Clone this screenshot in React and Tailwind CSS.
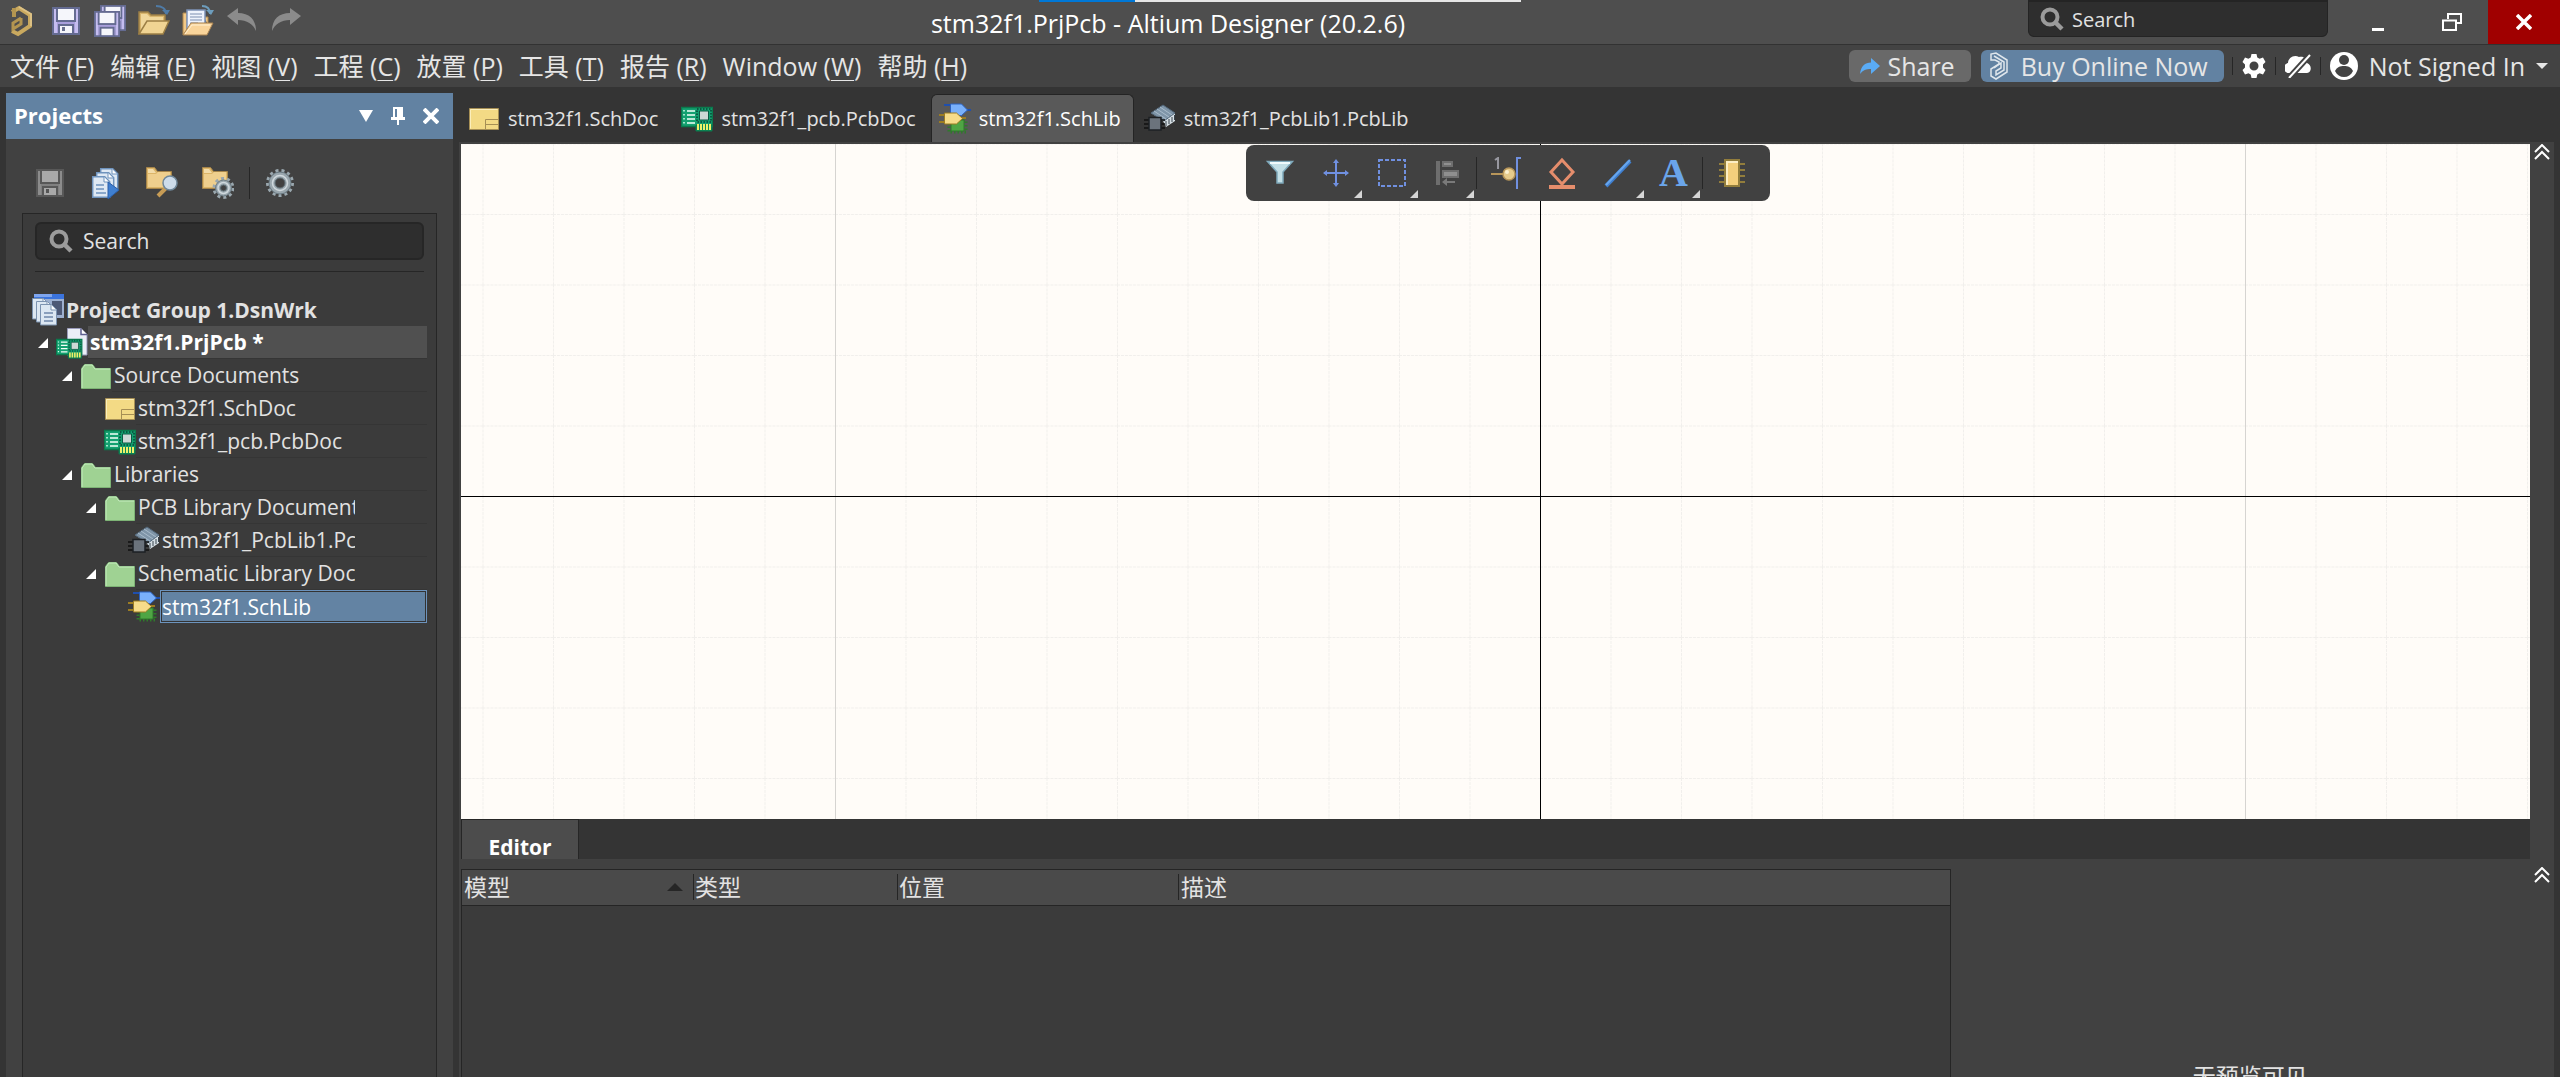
import React, { useState } from 'react';
import clsx from 'clsx';

/* ---------- icons ---------- */

const AltiumLogo = () => (
  <svg width="32" height="32" viewBox="0 0 32 32" fill="none">
    <path d="M6 7 13 3l11 7v11L12 29l-6-3" stroke="#c9a95f" strokeWidth="4" />
    <path d="M8 3v9" stroke="#b39550" strokeWidth="4" />
    <path d="M15 13v6l-8 5v-6l8-5" stroke="#b39550" strokeWidth="3" />
    <path d="M13 2 25 9v12" stroke="#dcc184" strokeWidth="2" />
  </svg>
);

const Floppy = ({ edge, body, light, paper, slot }) => (
  <>
    <path d="M0 0h28v28H0z" fill={edge} />
    <path d="M2 2h3v24H2zM23 2h3v24h-3z" fill={light} />
    <path d="M5 14h18v12H5z" fill={body} />
    <path d="M4 1h20v14H4z" fill={edge} />
    <path d="M6 2h16v11H6z" fill={paper} />
    <path d="M6 17h16v10H6z" fill={edge} />
    <path d="M8 19h12v7H8z" fill={paper} />
    <path d="M10 20h3v4h-3z" fill={slot} />
  </>
);

const SaveIcon = () => (
  <svg width="32" height="32" viewBox="0 0 32 32">
    <g transform="translate(2 2)">
      <Floppy edge="#646b91" body="#a99fdc" light="#c5bdf0" paper="#f5f6fb" slot="#6a7190" />
    </g>
  </svg>
);

const SaveAllIcon = () => (
  <svg width="32" height="32" viewBox="0 0 32 32">
    <g transform="translate(6 0) scale(.93)">
      <Floppy edge="#646b91" body="#a99fdc" light="#c5bdf0" paper="#f5f6fb" slot="#6a7190" />
    </g>
    <g transform="translate(0 6) scale(.93)">
      <Floppy edge="#646b91" body="#a99fdc" light="#c5bdf0" paper="#f5f6fb" slot="#f5f6fb" />
    </g>
  </svg>
);

const SaveGreyIcon = () => (
  <svg width="32" height="32" viewBox="0 0 32 32">
    <g transform="translate(2 2)">
      <Floppy edge="#585858" body="#808080" light="#8c8c8c" paper="#a9a9a9" slot="#555555" />
    </g>
  </svg>
);

const OpenFolderIcon = () => (
  <svg width="32" height="32" viewBox="0 0 32 32">
    <path d="M1 29V7h9l3 3h14v8" fill="#d8b56c" stroke="#9c7f45" strokeWidth="1.500" />
    <path d="M3 26V9h6l3 3h13v5H9z" fill="#f0d79b" />
    <path d="M1 29 9 16h22l-6 13z" fill="#f0d493" stroke="#9c7f45" strokeWidth="1.500" />
    <path d="M18 1c6 0 10 3 10 8" fill="none" stroke="#4f7ba6" strokeWidth="2" />
    <path d="M24 5h8l-3 5z" fill="#4f7ba6" />
  </svg>
);

const OpenDocsIcon = () => (
  <svg width="32" height="32" viewBox="0 0 32 32">
    <path d="M1 30V8h4v22M22 12h4v8" fill="#f2c987" stroke="#b0884c" />
    <path d="M5 24V5h18v19z" fill="#eef3fc" stroke="#7d92b6" strokeWidth="1.500" />
    <path d="M8 9h12M8 12h12M8 15h12M8 18h8" stroke="#7c8fb0" />
    <path d="M1 30 9 18h22l-6 12z" fill="#f9d49a" stroke="#a88250" />
    <path d="m3 29 7-9h18" stroke="#fff0d2" fill="none" />
    <path d="M20 1c5 0 8 3 8 8" fill="none" stroke="#6d9dbd" strokeWidth="2" />
    <path d="M24 5h8l-3 5z" fill="#6d9dbd" />
  </svg>
);

const CurvedArrow = ({ flip }) => (
  <svg width="32" height="32" viewBox="0 0 32 32" className={clsx(flip && '-scale-x-100')}>
    <path d="M1 11 12 3v5c11 0 18 6 18 18-3-7-9-11-18-11v5z" fill="#8b8b8b" />
  </svg>
);

const Magnifier = () => (
  <svg width="24" height="24" viewBox="0 0 24 24" fill="none" stroke="#9b9b9b" className="shrink-0">
    <circle cx="10" cy="10" r="7.500" strokeWidth="4" />
    <path d="m15 15 7 7" strokeWidth="4.500" />
  </svg>
);

const CopyDocsIcon = () => (
  <svg width="32" height="32" viewBox="0 0 32 32">
    {[[10, 1], [6, 5], [2, 9]].map(([x, y]) => (
      <g key={x} transform={`translate(${x} ${y})`}>
        <path d="M.700.700h12l5 5v15.600H.700z" fill="#dfe9f4" stroke="#6f93bd" strokeWidth="1.500" />
        <path d="M12 1v5h5" fill="#fff" stroke="#6f93bd" />
      </g>
    ))}
    <path d="M6 18h8M6 22h8M6 26h10" stroke="#6f93bd" strokeWidth="1.500" />
    <path d="M18 15v17l11-9z" fill="#3f7fd0" stroke="#2a5ea8" />
  </svg>
);

const SmallFolder = () => (
  <>
    <path d="M.500 21.500V.500h8l3 4h14v17z" fill="#dcb568" stroke="#a6854a" />
    <path d="M2 20V7h8l2-2h12v15z" fill="#efcf8d" />
    <path d="M2 6V2h5l3 4z" fill="#f3dca8" />
  </>
);

const GearShape = ({ r = 14, hole = 5, fill = '#9aa7ae' }) => (
  <>
    <circle r={r - 1.5} fill="none" stroke={fill} strokeWidth="3" strokeDasharray="3 3" />
    <circle r={r - 3} fill={fill} stroke="#6b7b84" />
    <circle r={hole + 2.5} fill="none" stroke="#cfd8dd" strokeWidth="1.500" />
    <circle r={hole} fill="#414141" stroke="#5d6b72" />
  </>
);

const FolderSearchIcon = () => (
  <svg width="32" height="32" viewBox="0 0 32 32">
    <SmallFolder />
    <path d="m12 29 8-8" stroke="#c79c55" strokeWidth="4" />
    <circle cx="24" cy="16" r="7" fill="#cddcea" stroke="#6f8799" strokeWidth="1.500" />
  </svg>
);

const FolderGearIcon = () => (
  <svg width="32" height="32" viewBox="0 0 32 32">
    <SmallFolder />
    <g transform="translate(21.500 21)">
      <GearShape r={11} hole={3} />
    </g>
  </svg>
);

const GearIcon = () => (
  <svg width="32" height="32" viewBox="-16 -16 32 32">
    <GearShape />
  </svg>
);

const WorkspaceIcon = () => (
  <svg width="32" height="32" viewBox="0 0 32 32">
    <path d="M2 0h30v24H2z" fill="#9db0d0" />
    <path d="M2 0h30v5H2z" fill="#3b74dd" />
    <path d="M2 0h18v3H2z" fill="#7fa6ee" />
    <path d="M20 7h10v14H20z" fill="#4d5976" />
    {[[0, 4], [4, 7], [8, 10]].map(([x, y]) => (
      <g key={x} transform={`translate(${x} ${y})`}>
        <path d="M.500.500h11l5 5V21h-16z" fill="#dce7f2" stroke="#7c93b0" />
        <path d="M11 1v5h5" fill="#fff" stroke="#7c93b0" />
      </g>
    ))}
    <path d="M12 19h9M12 23h9M12 27h9" stroke="#6f88ab" strokeWidth="1.500" />
  </svg>
);

const Board = () => (
  <>
    <path d="M.500.500h31v19h-31z" fill="#14a171" stroke="#0a7a4d" strokeWidth="1.500" />
    <path d="M15 18h16v6H15z" fill="#0d8a5b" stroke="#0a7a4d" />
    <path d="M6 4h8M6 8h8M6 12h8M6 16h8" stroke="#f2fff8" strokeWidth="1.500" />
    <path d="M3 3v15" stroke="#d5ffe9" strokeWidth="1.500" strokeDasharray="1.500 2.500" />
    <path d="M16 2h14v13H16z" fill="none" stroke="#0b5a43" strokeWidth="2" strokeDasharray="1.500 1.500" />
    <path d="M18.500 4h9v9h-9z" fill="#cdd8d5" stroke="#0a5b43" />
    <path d="M17 17v6M20 17v6M23 17v6M26 17v6M29 17v6" stroke="#eef06a" strokeWidth="2" />
  </>
);

const ProjectIcon = () => (
  <svg width="32" height="32" viewBox="0 0 32 32">
    <path d="M11.500 1.500H25l6 6V28H11.500z" fill="#eaeef6" stroke="#9a9bbb" />
    <path d="M25 1.500v6h6" fill="#fff" stroke="#5d5f8f" strokeWidth="1.500" />
    <g transform="translate(0 12) scale(.82 .8)">
      <Board />
    </g>
  </svg>
);

const PcbIcon = () => (
  <svg width="32" height="32" viewBox="0 0 32 32">
    <g transform="translate(0 4)">
      <Board />
    </g>
  </svg>
);

const FolderIcon = () => (
  <svg width="32" height="32" viewBox="0 0 32 32">
    <path d="M1.500 28.500v-20l3-4h8l3 4h15v20z" fill="#9fd293" stroke="#7db375" />
    <path d="M2 28V9l3-4h7l3 4h15" fill="none" stroke="#c6ecc0" />
  </svg>
);

const SchDocIcon = () => (
  <svg width="32" height="32" viewBox="0 0 32 32">
    <path d="M1.500 5.500h29v21h-29z" fill="#f3da85" stroke="#a68f55" />
    <path d="M2.500 25.500v-19h27" fill="none" stroke="#fbeebb" />
    <path d="M17.500 26.500v-10h13M17.500 21.500h13" fill="none" stroke="#a68f55" />
  </svg>
);

const PcbLibIcon = () => (
  <svg width="32" height="32" viewBox="0 0 32 32">
    <path d="m7 10 12 8 3 6 9-6v-8z" fill="#d5dee4" />
    <path d="m7 10 12-8 12 8-11 8z" fill="#7f95a8" stroke="#52677a" />
    <path d="m10 8 12 8M13 6l12 8M16 4l12 8" stroke="#a9bccb" />
    <path d="M22 18v5M25 16v5M28 14v5M30.500 12v5" stroke="#39444d" />
    <path d="M0 17h21M0 21h21M0 25h21" stroke="#111" strokeWidth="1.500" />
    <path d="M5 14.500h12V27H5z" fill="#6b737c" stroke="#1d2024" strokeWidth="1.500" />
  </svg>
);

const SchLibIcon = () => (
  <svg width="32" height="32" viewBox="0 0 32 32">
    <path d="M10 18h17v11H10z" fill="none" stroke="#2f7a2b" strokeWidth="3" strokeDasharray="1.500 2" />
    <path d="M12 17h13v11H12z" fill="#4fa544" stroke="#2f7a2b" />
    <path d="M5 2h7M5 11h5M27 7h5" stroke="#1f4fae" strokeWidth="2" />
    <path d="M11.500 1h11l6 6-6 5.500h-11z" fill="#79b0fb" stroke="#2c62c0" />
    <path d="M0 12h6M0 19h6M23 15h4" stroke="#9c7c22" strokeWidth="2" />
    <path d="M5.500 10h12l6 5.500-6 5.500h-12z" fill="#f6dc8a" stroke="#9c7c22" />
  </svg>
);

const ShareArrow = () => (
  <svg width="22" height="18" viewBox="0 0 22 18">
    <path d="M1 17C2 9 6 5.500 12 5.500V1l9 8-9 8v-5c-5 0-8 1-11 5z" fill="#5aabf5" />
  </svg>
);

const BuyLogo = () => (
  <svg width="20" height="28" viewBox="0 0 20 28" fill="none" stroke="#dfe6ec" strokeWidth="1.500">
    <path d="M2 8V2l5-1 11 7v12L7 27l-5-3v-7l8-5v-2L6 8z" />
    <path d="M5 4l10 6v8l-8 5v-4l5-3v-5l-7 5" />
  </svg>
);

const SettingsGear = () => (
  <svg width="24" height="24" viewBox="0 0 24 24">
    <path
      fillRule="evenodd"
      fill="#fff"
      d="M9.500 0h5l.800 3.400 2.300 1.300L21 3.600l2.500 4.300-2.500 2.600v3l2.500 2.600-2.500 4.300-3.400-1.100-2.300 1.300-.800 3.400h-5l-.800-3.400-2.300-1.300L3 20.400.500 16.100 3 13.500v-3L.500 7.900 3 3.600l3.400 1.100 2.300-1.300zM12 7.500a4.500 4.500 0 1 0 0 9 4.500 4.500 0 0 0 0-9z"
    />
  </svg>
);

const CloudOff = () => (
  <svg width="26" height="24" viewBox="0 0 26 24">
    <path d="M5 19a5 5 0 0 1-2-10C3 4 9 0 14 3c5-1 8 2 8 6 5 2 5 9 0 10z" fill="#fff" />
    <path d="M4 24 25 1" stroke="#434343" strokeWidth="6" />
    <path d="M4 24 25 1" stroke="#fff" strokeWidth="2" />
  </svg>
);

const UserCircle = () => (
  <svg width="28" height="28" viewBox="0 0 28 28">
    <circle cx="14" cy="14" r="14" fill="#fff" />
    <circle cx="14" cy="8" r="5" fill="#434343" />
    <path d="M5 19c2-4 5-5 9-5s7 1 9 5c-2 4-5 6-9 6s-7-2-9-6z" fill="#434343" />
  </svg>
);

const DoubleChevron = () => (
  <svg width="16" height="16" viewBox="0 0 16 16" fill="none" stroke="#fff" strokeWidth="2">
    <path d="m1 8 7-7 7 7M1 15l7-7 7 7" />
  </svg>
);

/* ---------- active bar icons ---------- */

const FilterIcon = () => (
  <svg width="32" height="32" viewBox="0 0 32 32">
    <path d="M3.500 4.500h25L19 15v11h-6V15z" fill="#c3dfe6" stroke="#7fa9bb" strokeWidth="1.500" />
    <path d="M6 6h20" stroke="#f0fafc" strokeWidth="2" />
  </svg>
);

const MoveIcon = () => (
  <svg width="32" height="32" viewBox="0 0 32 32">
    <path d="M16 4v24M4 16h24" stroke="#7090e0" strokeWidth="2" />
    <path d="m13 6 3-4 3 4zM13 26l3 4 3-4zM7 13l-4 3 4 3zM25 13l4 3-4 3z" fill="#7090e0" />
  </svg>
);

const SelectIcon = () => (
  <svg width="32" height="32" viewBox="0 0 32 32">
    <path d="M3 3h26v26H3z" fill="none" stroke="#7090e0" strokeWidth="2" strokeDasharray="4 2" />
  </svg>
);

const AlignIcon = () => (
  <svg width="32" height="32" viewBox="0 0 32 32">
    <path d="M4 4h4v24H4z" fill="#6e6e6e" />
    <path d="M10 4h11v6H10zM10 13h17v8H10z" fill="#6e6e6e" />
    <path d="M12 6h7v2h-7zM12 15h13v4H12z" fill="#8f8f8f" />
    <path d="m10 25 5-4v3h8v2h-8v3z" fill="#7a7a7a" />
  </svg>
);

const PinIcon = () => (
  <svg width="32" height="32" viewBox="0 0 32 32">
    <path d="m5 3 3-2v11" fill="none" stroke="#97979f" strokeWidth="2" />
    <path d="M1 17h13" stroke="#b8965a" strokeWidth="2" />
    <path d="M31 1h-4v31" fill="none" stroke="#7090e0" strokeWidth="2" />
    <circle cx="19" cy="17" r="6" fill="#e6cb8c" stroke="#b8965a" strokeWidth="1.500" />
    <circle cx="17" cy="15" r="2" fill="#fbf0d0" />
  </svg>
);

const EraseIcon = () => (
  <svg width="32" height="32" viewBox="0 0 32 32">
    <path d="m16 3 11 12-11 12L5 15z" fill="none" stroke="#e58d6c" strokeWidth="3" />
    <path d="M3 28h26v4H3z" fill="#e58d6c" />
  </svg>
);

const LineIcon = () => (
  <svg width="32" height="32" viewBox="0 0 32 32">
    <path d="M4 29 28 4" stroke="#3f7fd0" strokeWidth="4" />
    <path d="M4 28 28 3" stroke="#68a6ec" strokeWidth="2" />
  </svg>
);

const PartIcon = () => (
  <svg width="32" height="32" viewBox="0 0 32 32">
    <path d="M3 7h26M3 13h26M3 19h26M3 25h26" stroke="#927d3c" strokeWidth="2" />
    <path d="M9 3h14v26H9z" fill="#f4cf7c" stroke="#927d3c" strokeWidth="2" />
    <path d="M11 28V5h11" fill="none" stroke="#fdeec4" strokeWidth="2" />
  </svg>
);

/* ---------- data ---------- */

const menus = [
  ['文件', 'F'],
  ['编辑', 'E'],
  ['视图', 'V'],
  ['工程', 'C'],
  ['放置', 'P'],
  ['工具', 'T'],
  ['报告', 'R'],
  ['Window', 'W'],
  ['帮助', 'H'],
];

const quickActions = [
  { label: 'Save', icon: <SaveIcon /> },
  { label: 'Save All', icon: <SaveAllIcon /> },
  { label: 'Open', icon: <OpenFolderIcon /> },
  { label: 'Open Project', icon: <OpenDocsIcon /> },
  { label: 'Undo', icon: <CurvedArrow /> },
  { label: 'Redo', icon: <CurvedArrow flip /> },
];

const tabs = [
  { name: 'stm32f1.SchDoc', icon: <SchDocIcon /> },
  { name: 'stm32f1_pcb.PcbDoc', icon: <PcbIcon /> },
  { name: 'stm32f1.SchLib', icon: <SchLibIcon /> },
  { name: 'stm32f1_PcbLib1.PcbLib', icon: <PcbLibIcon /> },
];

const indents = ['pl-[9px]', 'pl-[33px]', 'pl-[57px]', 'pl-[81px]', 'pl-[105px]'];

const tree = [
  { level: 0, name: 'Project Group 1.DsnWrk', icon: <WorkspaceIcon />, bold: true },
  { level: 1, name: 'stm32f1.PrjPcb *', icon: <ProjectIcon />, bold: true, open: true, focused: true },
  { level: 2, name: 'Source Documents', icon: <FolderIcon />, open: true },
  { level: 3, name: 'stm32f1.SchDoc', icon: <SchDocIcon /> },
  { level: 3, name: 'stm32f1_pcb.PcbDoc', icon: <PcbIcon /> },
  { level: 2, name: 'Libraries', icon: <FolderIcon />, open: true },
  { level: 3, name: 'PCB Library Documents', icon: <FolderIcon />, open: true },
  { level: 4, name: 'stm32f1_PcbLib1.PcbLib', icon: <PcbLibIcon /> },
  { level: 3, name: 'Schematic Library Documents', icon: <FolderIcon />, open: true },
  { level: 4, name: 'stm32f1.SchLib', icon: <SchLibIcon /> },
];

const activeBar = [
  { label: 'Filter', icon: <FilterIcon /> },
  { label: 'Move', icon: <MoveIcon />, more: true },
  { label: 'Select', icon: <SelectIcon />, more: true },
  { label: 'Align', icon: <AlignIcon />, more: true },
  { label: 'Pin', icon: <PinIcon />, divider: true },
  { label: 'IEEE Symbol', icon: <EraseIcon /> },
  { label: 'Line', icon: <LineIcon />, more: true },
  { label: 'Text', more: true },
  { label: 'Part', icon: <PartIcon />, divider: true },
];

/* ---------- parts ---------- */

const TitleBar = () => (
  <header className="relative flex h-[45px] shrink-0 items-start border-b border-[#323232] bg-[#4e4e4e]">
    <div className="absolute top-0 left-[1039px] flex h-0.5 w-[482px] bg-[#e6e6e6]">
      <div className="w-24 bg-[#0078d7]"></div>
    </div>
    <div className="flex items-center gap-3 pt-[5px] pl-1.5">
      <AltiumLogo />
      {quickActions.map((item) => (
        <button key={item.label} aria-label={item.label}>{item.icon}</button>
      ))}
    </div>
    <h1 className="flex-1 pl-1.5 text-center text-[25px] leading-[46px] text-white">stm32f1.PrjPcb - Altium Designer (20.2.6)</h1>
    <label className="flex h-[37px] w-[300px] items-center gap-2 rounded-b-md border border-t-2 border-[#242424] bg-[#2e2e2e] pl-[11px]">
      <Magnifier />
      <input aria-label="Search" placeholder="Search" className="w-full bg-transparent pt-0.5 text-[20px] outline-none placeholder:text-[#e2e2e2]" />
    </label>
    <div className="ml-4 flex h-11">
      <button aria-label="Minimize" className="flex w-[72px] items-center justify-center">
        <svg width="18" height="18" viewBox="0 0 18 18"><path d="M1 15h12v3H1z" fill="#fff" /></svg>
      </button>
      <button aria-label="Restore" className="flex w-[72px] items-center justify-center">
        <svg width="20" height="18" viewBox="0 0 20 18" fill="none" stroke="#fff" strokeWidth="2">
          <path d="M6 6V1h13v9h-5" />
          <path d="M1 7.500h13V17H1z" />
        </svg>
      </button>
      <button aria-label="Close" className="flex w-[72px] items-center justify-center bg-[#a00000]">
        <svg width="16" height="16" viewBox="0 0 16 16"><path d="m1 1 14 14M15 1 1 15" stroke="#fff" strokeWidth="3.500" /></svg>
      </button>
    </div>
  </header>
);

const MenuBar = () => (
  <nav className="flex h-[42px] shrink-0 items-center bg-[#434343] pl-2.5 text-[25px] leading-8 text-[#e6e6e6]">
    <div className="flex gap-4">
      {menus.map(([name, key]) => (
        <button key={key}>
          {name} (<span className="underline decoration-1 underline-offset-4">{key}</span>)
        </button>
      ))}
    </div>
    <button className="ml-auto flex h-8 items-center gap-1.5 rounded-md bg-[#696969] pr-4 pl-2.5">
      <ShareArrow />
      Share
    </button>
    <button className="ml-2.5 flex h-8 items-center gap-3 rounded-md bg-[#6282a2] pr-4 pl-2">
      <BuyLogo />
      Buy Online Now
    </button>
    <div className="ml-2 flex items-center gap-[9px]">
      <span className="h-[18px] w-px bg-[#262626]"></span>
      <button aria-label="Settings"><SettingsGear /></button>
      <span className="h-[18px] w-px bg-[#262626]"></span>
      <button aria-label="Offline"><CloudOff /></button>
      <span className="h-[18px] w-px bg-[#262626]"></span>
      <button className="flex items-center gap-[11px] pr-3">
        <UserCircle />
        Not Signed In
        <svg width="12" height="6" viewBox="0 0 12 6"><path d="M0 0h12L6 6z" fill="#e6e6e6" /></svg>
      </button>
    </div>
  </nav>
);

const TreeRow = ({ item, selected, onSelect }) => (
  <li className={clsx('flex h-[33px] items-stretch pr-[9px]', indents[item.level])}>
    {item.level > 0 && (
      <span className="-ml-6 flex w-6 items-center pl-1.5">
        {item.open && <svg width="10" height="10" viewBox="0 0 10 10"><path d="M10 0v10H0z" fill="#fff" /></svg>}
      </span>
    )}
    <span className="flex w-8 shrink-0 items-center">{item.icon}</span>
    <button
      onClick={onSelect}
      className={clsx(
        'flex min-w-0 flex-1 items-center text-left',
        item.bold && 'font-bold',
        item.focused && 'bg-[#505050] text-white',
        selected
          ? 'border border-[#6c93bd] bg-[#6383a3] pl-px text-white inset-ring inset-ring-[#333]'
          : 'pl-0.5',
        !selected && item.level > 0 && 'border-b border-[#353535]'
      )}
    >
      <span className="mr-[72px] min-w-0 overflow-hidden leading-[30px] whitespace-nowrap">{item.name}</span>
    </button>
  </li>
);

const ProjectsPanel = () => {
  const [selected, setSelected] = useState('stm32f1.SchLib');

  return (
    <aside className="mt-1.5 ml-1.5 flex w-[447px] shrink-0 flex-col bg-[#414141]">
      <div className="flex h-[46px] shrink-0 items-center bg-[#6282a2] pr-3.5 pl-2">
        <h2 className="flex-1 pb-0.5 text-[22px] font-bold text-white">Projects</h2>
        <button aria-label="Panel menu" className="mr-[18px]">
          <svg width="14" height="12" viewBox="0 0 14 12"><path d="M0 0h14L7 12z" fill="#fff" /></svg>
        </button>
        <button aria-label="Pin panel" className="mr-[18px]">
          <svg width="14" height="18" viewBox="0 0 14 18">
            <path fillRule="evenodd" d="M2 0h10v10h2v3H8v5H6v-5H0v-3h2zM4 2v8h2V2z" fill="#fff" />
          </svg>
        </button>
        <button aria-label="Close panel">
          <svg width="16" height="16" viewBox="0 0 16 16"><path d="m1 1 14 14M15 1 1 15" stroke="#fff" strokeWidth="4" /></svg>
        </button>
      </div>

      <div className="mt-7 mb-3.5 flex items-center gap-6 pl-7">
        <button aria-label="Save" className="disabled:cursor-default" disabled><SaveGreyIcon /></button>
        <button aria-label="Compile"><CopyDocsIcon /></button>
        <button aria-label="Explore"><FolderSearchIcon /></button>
        <button aria-label="Project options"><FolderGearIcon /></button>
        <button aria-label="Panel settings" className="-ml-[9px] border-l border-[#262626] pl-3.5"><GearIcon /></button>
      </div>

      <div className="mx-4 flex-1 border border-b-0 border-[#262626] bg-[#3b3b3b]">
        <div className="mx-3 border-b border-[#262626] pt-2 pb-[11px]">
          <label className="flex h-[38px] items-center gap-2.5 rounded-md border-2 border-[#262626] bg-[#2e2e2e] pl-3">
            <Magnifier />
            <input aria-label="Search projects" placeholder="Search" className="w-full bg-transparent pt-0.5 text-[21px] outline-none placeholder:text-[#e2e2e2]" />
          </label>
        </div>
        <ul className="pt-[21px] text-[21px] text-[#e2e2e2]">
          {tree.map((item) => (
            <TreeRow key={item.name} item={item} selected={selected === item.name} onSelect={() => setSelected(item.name)} />
          ))}
        </ul>
      </div>
    </aside>
  );
};

const DocumentTabs = () => {
  const [active, setActive] = useState('stm32f1.SchLib');

  return (
    <div className="flex h-[55px] shrink-0 items-end gap-0.5 pl-px text-[20px]">
      {tabs.map((tab) => (
        <button
          key={tab.name}
          onClick={() => setActive(tab.name)}
          className={clsx(
            'flex h-12 items-center gap-2 rounded-t-md border border-b-0 pr-3 pl-[7px]',
            active === tab.name ? 'border-[#242424] bg-[#595959] text-white' : 'border-transparent text-[#e2e2e2]'
          )}
        >
          {tab.icon}
          {tab.name}
        </button>
      ))}
    </div>
  );
};

// Sheet origin sits at (1079, 352); minor grid every 70.5px, major every 10 cells
const Sheet = () => (
  <svg className="block h-full flex-1 bg-[#fffcf8]">
    <defs>
      <pattern id="minor" x="1079" y="352" width="70.500" height="70.500" patternUnits="userSpaceOnUse">
        <path d="M.500 0v70.500M0 .500h70.500" stroke="#f1efec" strokeDasharray="3 1" />
      </pattern>
      <pattern id="major" x="1079" y="352" width="705" height="705" patternUnits="userSpaceOnUse">
        <path d="M.500 0v705" stroke="#d6d4d1" />
      </pattern>
    </defs>
    <rect width="100%" height="100%" fill="url(#minor)" />
    <rect width="100%" height="100%" fill="url(#major)" />
    <path d="M1079.500 0v4000M0 352.500h6000" stroke="#000" shapeRendering="crispEdges" />
  </svg>
);

const ActiveBar = () => (
  <div className="absolute top-px left-1/2 flex h-14 -translate-x-1/2 items-center rounded-lg bg-[#414141] pr-2.5 pl-1.5">
    {activeBar.map((item) => (
      <React.Fragment key={item.label}>
        {item.divider && <span className="mr-px h-8 w-px bg-[#262626]"></span>}
        <button aria-label={item.label} className="relative flex h-14 w-14 items-center justify-center">
          {item.icon || <span className="font-['Liberation_Serif',serif] text-[40px] leading-8 font-bold text-[#6aa5ea]">A</span>}
          {item.more && (
            <svg width="8" height="8" viewBox="0 0 8 8" className="absolute right-0.5 bottom-[3px]"><path d="M8 0v8H0z" fill="#d6d6d6" /></svg>
          )}
        </button>
      </React.Fragment>
    ))}
  </div>
);

const EditorPanel = () => (
  <section className="flex h-[258px] shrink-0">
    <div className="flex flex-1 flex-col">
      <div className="flex h-10 shrink-0 bg-[#343434]">
        <button className="w-[118px] border border-b-0 border-[#262626] bg-[#4c4c4c] pt-3.5 text-[21px] leading-6 font-bold text-white">Editor</button>
      </div>
      <div className="flex flex-1 pt-2.5">
        <div className="w-[72%] border border-b-0 border-[#252525] bg-[#3b3b3b]">
          <table className="w-full table-fixed text-left text-[23px] text-[#e2e2e2]">
            <thead>
              <tr className="h-[35px] border-b border-[#252525] bg-[#4a4a4a] leading-[34px]">
                <th className="w-[231px] pl-0.5 font-normal">
                  <div className="flex items-center justify-between pr-2.5">
                    模型
                    <svg width="16" height="8" viewBox="0 0 16 8"><path d="M8 0l8 8H0z" fill="#262626" /></svg>
                  </div>
                </th>
                <th className="w-[204px] font-normal"><div className="my-1 border-l border-[#252525] pl-px leading-[26px]">类型</div></th>
                <th className="w-[281px] font-normal"><div className="my-1 border-l border-[#252525] pl-px leading-[26px]">位置</div></th>
                <th className="font-normal"><div className="my-1 border-l border-[#252525] pl-0.5 leading-[26px]">描述</div></th>
              </tr>
            </thead>
          </table>
        </div>
        <p className="flex-1 overflow-hidden pt-[191px] pl-5 text-center text-[23px] leading-8 whitespace-nowrap text-[#e2e2e2]">无预览可见</p>
      </div>
    </div>
    <div className="w-6 pt-12 pl-1">
      <button aria-label="Collapse panel" className="block"><DoubleChevron /></button>
    </div>
  </section>
);

const App = () => (
  <div className="flex h-screen flex-col overflow-hidden bg-[#343434] font-['Open_Sans','Noto_Sans_CJK_SC',sans-serif]">
    <TitleBar />
    <MenuBar />
    <div className="flex min-h-0 flex-1">
      <ProjectsPanel />
      <main className="ml-1.5 flex min-w-0 flex-1 flex-col pr-1.5">
        <DocumentTabs />
        <div className="flex min-h-0 flex-1 flex-col border-t-2 border-l-2 border-[#414141] bg-[#414141]">
          <div className="relative flex min-h-0 flex-1">
            <Sheet />
            <div className="w-6 pl-1">
              <button aria-label="Collapse editor" className="block"><DoubleChevron /></button>
            </div>
            <ActiveBar />
          </div>
          <EditorPanel />
        </div>
      </main>
    </div>
  </div>
);

export default App;
